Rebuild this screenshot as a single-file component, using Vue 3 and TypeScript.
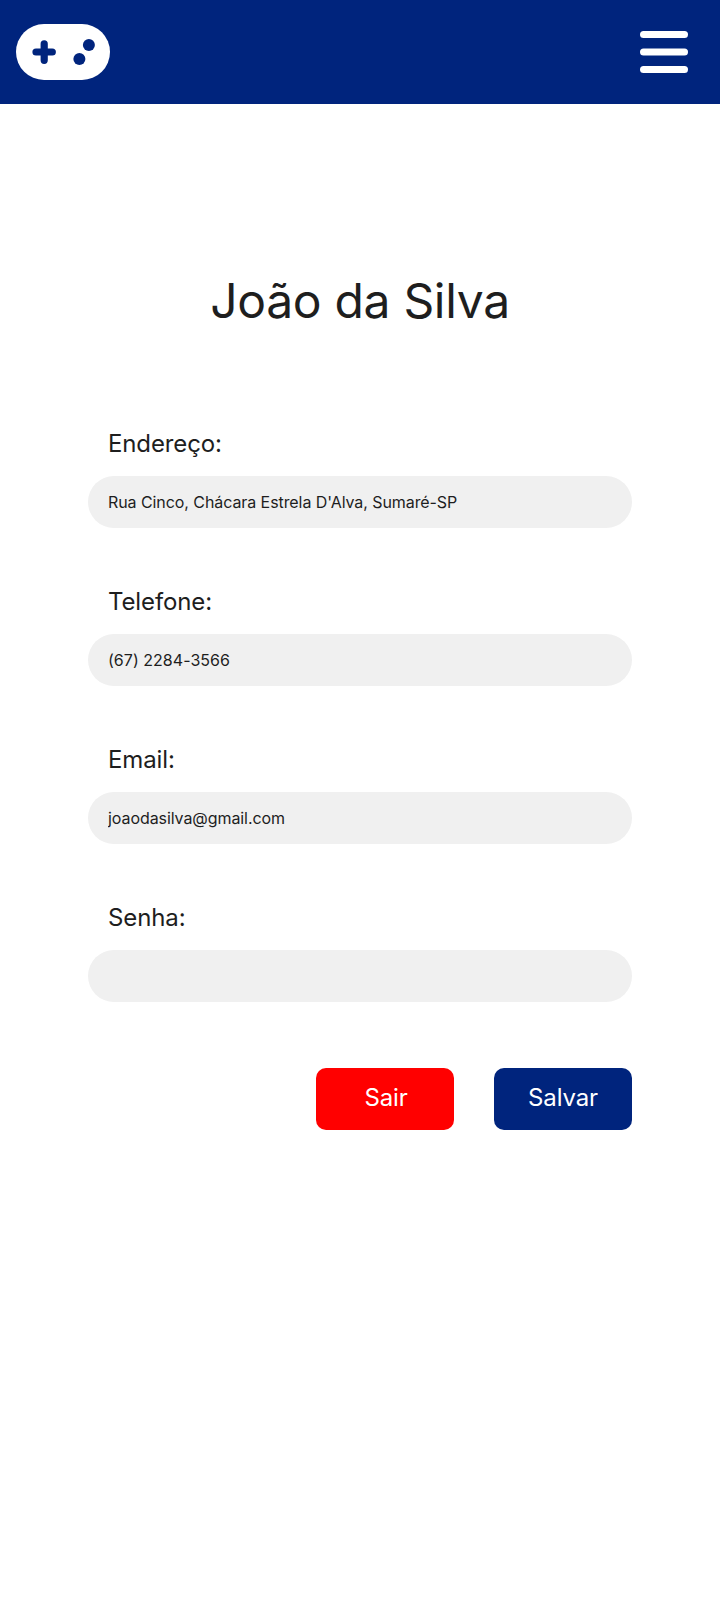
<script setup lang="ts">
import { ref } from 'vue'

interface Field {
  id: string
  label: string
  type: string
  value: string
}

const name = ref('João da Silva')
const fields = ref<Field[]>([
  { id: 'endereco', label: 'Endereço:', type: 'text', value: "Rua Cinco, Chácara Estrela D'Alva, Sumaré-SP" },
  { id: 'telefone', label: 'Telefone:', type: 'tel', value: '(67) 2284-3566' },
  { id: 'email', label: 'Email:', type: 'text', value: 'joaodasilva@gmail.com' },
  { id: 'senha', label: 'Senha:', type: 'password', value: '' },
])
</script>

<template>
  <div class="page">
    <header class="topbar">
      <svg class="logo" width="94" height="56" viewBox="0 0 94 56" aria-hidden="true">
        <rect width="94" height="56" rx="28" fill="#fff" />
        <path d="M20 28h16.3M28.2 19.8v16.5" stroke="#00247d" stroke-width="7.2" stroke-linecap="round" />
        <circle cx="72.9" cy="21" r="6" fill="#00247d" />
        <circle cx="63.4" cy="35" r="6" fill="#00247d" />
      </svg>
      <button class="menu" type="button" aria-label="Menu">
        <svg width="48" height="42" viewBox="0 0 48 42" aria-hidden="true">
          <rect width="48" height="7" rx="3.5" fill="#fff" />
          <rect y="17.5" width="48" height="7" rx="3.5" fill="#fff" />
          <rect y="35" width="48" height="7" rx="3.5" fill="#fff" />
        </svg>
      </button>
    </header>
    <main class="profile">
      <h1 class="name">{{ name }}</h1>
      <form class="form" @submit.prevent>
        <div v-for="field in fields" :key="field.id" class="field">
          <label class="label" :for="field.id">{{ field.label }}</label>
          <input
            :id="field.id"
            v-model="field.value"
            class="input"
            :class="{ phone: field.type === 'tel' }"
            :type="field.type"
            spellcheck="false"
          />
        </div>
        <div class="actions">
          <button class="button exit" type="button">Sair</button>
          <button class="button save" type="submit">Salvar</button>
        </div>
      </form>
    </main>
  </div>
</template>

<style>
body {
  margin: 0;
  background: #fff;
}
</style>

<style scoped>
.page {
  min-height: 1600px;
  background: #fff;
  color: #1e1e1e;
  font-family: Inter, "Liberation Sans", sans-serif;
  font-weight: 400;
  -webkit-font-smoothing: antialiased;
}
.topbar {
  box-sizing: border-box;
  height: 104px;
  padding: 0 32px 0 16px;
  display: flex;
  align-items: center;
  justify-content: space-between;
  background: #00247d;
}
.logo {
  display: block;
}
.menu {
  padding: 0;
  border: 0;
  background: none;
}
.menu svg {
  display: block;
}
.profile {
  width: 544px;
  margin: 0 auto;
  padding-top: 168px;
}
.name {
  margin: 0;
  font-size: 48px;
  line-height: 58px;
  font-weight: 400;
  letter-spacing: -0.32px;
  text-align: center;
}
.form {
  margin-top: 99px;
}
.field {
  height: 158px;
}
.label {
  display: block;
  margin: 0 20px 18px;
  font-size: 24px;
  line-height: 29px;
  letter-spacing: -0.12px;
}
.input {
  display: block;
  box-sizing: border-box;
  width: 100%;
  height: 52px;
  padding: 0 20px;
  border: 0;
  border-radius: 26px;
  background: #f0f0f0;
  color: inherit;
  font: inherit;
  font-size: 16px;
  letter-spacing: -0.075px;
}
.input.phone {
  letter-spacing: 0.03px;
}
.actions {
  display: flex;
  justify-content: flex-end;
  gap: 40px;
  margin-top: 7px;
}
.button {
  box-sizing: border-box;
  width: 138px;
  height: 62px;
  padding: 0 0 3px;
  border: 0;
  border-radius: 10px;
  color: #fff;
  font: inherit;
  font-size: 24px;
  letter-spacing: -0.12px;
}
.exit {
  padding-left: 2px;
  background: #f00;
}
.save {
  background: #00247d;
}
</style>
